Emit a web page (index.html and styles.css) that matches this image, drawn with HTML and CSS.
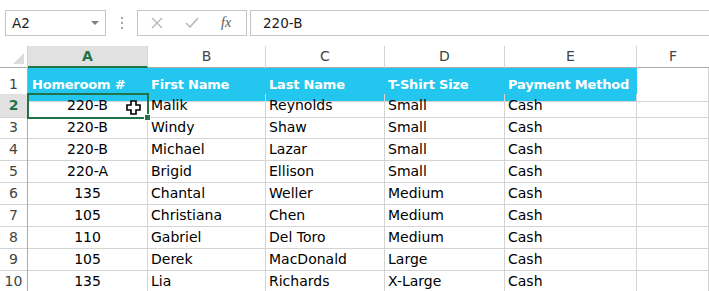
FILE: index.html
```html
<!DOCTYPE html>
<html>
<head>
    <title>Homeroom Sheet</title>
    <!-- Styles for the sheet live in the stylesheet below -->
    <link rel="stylesheet" href="styles.css">
</head>

<body>
    <!-- Name box and formula bar -->
    <div class="toolbar">
        <div class="name-box">
            <span>A2</span>
            <span class="drop-arrow"></span>
        </div>
        <div class="grip">
            <span></span><span></span><span></span>
        </div>
        <div class="fx-buttons">
            <svg class="fx-icon" width="12" height="12" viewBox="0 0 12 12">
                <path d="M1 1 L11 11 M11 1 L1 11" stroke="#b9b9b9" stroke-width="1.4" fill="none"/>
            </svg>
            <svg class="fx-icon" width="14" height="12" viewBox="0 0 14 12">
                <path d="M1 6 L5 10 L13 1" stroke="#b9b9b9" stroke-width="1.6" fill="none"/>
            </svg>
            <span class="fx-label">fx</span>
        </div>
        <div class="formula-input">220-B</div>
    </div>

    <!-- The worksheet grid -->
    <div class="sheet">
        <div class="row col-heads">
            <div class="corner"><span class="corner-mark"></span></div>
            <div class="col-head active">A</div>
            <div class="col-head">B</div>
            <div class="col-head">C</div>
            <div class="col-head">D</div>
            <div class="col-head">E</div>
            <div class="col-head">F</div>
        </div>

        <div class="row title-row">
            <div class="row-head">1</div>
            <div class="cell head">Homeroom #</div>
            <div class="cell head">First Name</div>
            <div class="cell head">Last Name</div>
            <div class="cell head">T-Shirt Size</div>
            <div class="cell head">Payment Method</div>
            <div class="cell"></div>
        </div>

        <div class="row">
            <div class="row-head active">2</div>
            <div class="cell num selected">220-B
                <svg class="cursor" width="15" height="15" viewBox="0 0 15 15">
                    <polygon points="5,1 10,1 10,5 14,5 14,10 10,10 10,14 5,14 5,10 1,10 1,5 5,5" fill="#fff" stroke="#000" stroke-width="1.6"/>
                </svg>
                <span class="fill-handle"></span>
            </div>
            <div class="cell">Malik</div>
            <div class="cell">Reynolds</div>
            <div class="cell">Small</div>
            <div class="cell">Cash</div>
            <div class="cell"></div>
        </div>
        <div class="row">
            <div class="row-head">3</div>
            <div class="cell num">220-B</div>
            <div class="cell">Windy</div>
            <div class="cell">Shaw</div>
            <div class="cell">Small</div>
            <div class="cell">Cash</div>
            <div class="cell"></div>
        </div>
        <div class="row">
            <div class="row-head">4</div>
            <div class="cell num">220-B</div>
            <div class="cell">Michael</div>
            <div class="cell">Lazar</div>
            <div class="cell">Small</div>
            <div class="cell">Cash</div>
            <div class="cell"></div>
        </div>
        <div class="row">
            <div class="row-head">5</div>
            <div class="cell num">220-A</div>
            <div class="cell">Brigid</div>
            <div class="cell">Ellison</div>
            <div class="cell">Small</div>
            <div class="cell">Cash</div>
            <div class="cell"></div>
        </div>
        <div class="row">
            <div class="row-head">6</div>
            <div class="cell num">135</div>
            <div class="cell">Chantal</div>
            <div class="cell">Weller</div>
            <div class="cell">Medium</div>
            <div class="cell">Cash</div>
            <div class="cell"></div>
        </div>
        <div class="row">
            <div class="row-head">7</div>
            <div class="cell num">105</div>
            <div class="cell">Christiana</div>
            <div class="cell">Chen</div>
            <div class="cell">Medium</div>
            <div class="cell">Cash</div>
            <div class="cell"></div>
        </div>
        <div class="row">
            <div class="row-head">8</div>
            <div class="cell num">110</div>
            <div class="cell">Gabriel</div>
            <div class="cell">Del Toro</div>
            <div class="cell">Medium</div>
            <div class="cell">Cash</div>
            <div class="cell"></div>
        </div>
        <div class="row">
            <div class="row-head">9</div>
            <div class="cell num">105</div>
            <div class="cell">Derek</div>
            <div class="cell">MacDonald</div>
            <div class="cell">Large</div>
            <div class="cell">Cash</div>
            <div class="cell"></div>
        </div>
        <div class="row">
            <div class="row-head">10</div>
            <div class="cell num">135</div>
            <div class="cell">Lia</div>
            <div class="cell">Richards</div>
            <div class="cell">X-Large</div>
            <div class="cell">Cash</div>
            <div class="cell"></div>
        </div>
    </div>
</body>
</html>
```

FILE: styles.css
```css
body {
    font-family: "DejaVu Sans", sans-serif;
    background-color: #fff;
    margin: 0;
    overflow: hidden;
    color: #000;
}

/* toolbar */
.toolbar {
    display: flex;
    align-items: center;
    margin-top: 10px;
    padding-left: 5px;
    height: 26px;
}

.name-box {
    box-sizing: border-box;
    width: 101px;
    height: 26px;
    border: 1px solid #c6c6c6;
    display: flex;
    align-items: center;
    justify-content: space-between;
    padding: 0 6px 0 6px;
    font-size: 13.5px;
    color: #222;
}

.drop-arrow {
    width: 0;
    height: 0;
    border-left: 4px solid transparent;
    border-right: 4px solid transparent;
    border-top: 4px solid #808080;
}

.grip {
    width: 31px;
    display: flex;
    flex-direction: column;
    align-items: center;
    gap: 3px;
}

.grip span {
    width: 2px;
    height: 2px;
    background-color: #a6a6a6;
}

.fx-buttons {
    box-sizing: border-box;
    width: 110px;
    height: 26px;
    border: 1px solid #c6c6c6;
    display: flex;
    align-items: center;
    padding-left: 13px;
}

.fx-icon {
    margin-right: 22px;
}

.fx-label {
    font-family: "Liberation Serif", serif;
    font-style: italic;
    font-size: 14px;
    color: #555;
}

.formula-input {
    box-sizing: border-box;
    flex: 1;
    height: 26px;
    margin-left: 3px;
    border: 1px solid #c6c6c6;
    border-right: none;
    display: flex;
    align-items: center;
    padding-left: 12px;
    font-size: 13.5px;
    color: #222;
}

/* sheet */
.sheet {
    margin-top: 10px;
}

.row {
    display: grid;
    grid-template-columns: 28px 120px 118px 119px 120px 132px 72px;
    height: 22px;
}

.col-heads {
    height: 21px;
    border-bottom: 1px solid #ababab;
}

.corner {
    position: relative;
    border-right: 1px solid #d4d4d4;
}

.corner-mark {
    position: absolute;
    right: 3px;
    bottom: 4px;
    width: 0;
    height: 0;
    border-left: 11px solid transparent;
    border-bottom: 11px solid #dcdcdc;
}

.col-head {
    box-sizing: border-box;
    border-right: 1px solid #d4d4d4;
    text-align: center;
    font-size: 14px;
    line-height: 21px;
    color: #444;
}

.col-head:last-child {
    border-right: none;
}

.col-head.active {
    background-color: #e1e1e1;
    color: #217346;
    font-weight: bold;
    border-bottom: 2px solid #217346;
    line-height: 20px;
}

.row-head {
    box-sizing: border-box;
    border-right: 1px solid #ababab;
    border-bottom: 1px solid #d4d4d4;
    text-align: center;
    font-size: 14px;
    line-height: 22px;
    color: #444;
}

.row-head.active {
    background-color: #e1e1e1;
    color: #217346;
    font-weight: bold;
}

.cell {
    box-sizing: border-box;
    border-right: 1px solid #d4d4d4;
    border-bottom: 1px solid #d4d4d4;
    padding-left: 3px;
    font-size: 14px;
    line-height: 23px;
    white-space: nowrap;
    overflow: hidden;
}

.cell.num {
    text-align: center;
    padding-left: 0;
}

.title-row {
    height: 26px;
}

.title-row .row-head {
    line-height: 33px;
}

.cell.head {
    background-color: #23c6ee;
    color: #fff;
    font-weight: bold;
    font-size: 13px;
    letter-spacing: -0.2px;
    line-height: 34px;
    border-right: none;
}

.cell.head:nth-child(2) {
    padding-left: 4px;
}

.cell.selected {
    position: relative;
    overflow: visible;
    outline: 2px solid #217346;
    outline-offset: -1px;
    z-index: 2;
}

.cursor {
    position: absolute;
    left: 98px;
    top: 6px;
}

.fill-handle {
    position: absolute;
    right: -4px;
    bottom: -4px;
    width: 5px;
    height: 5px;
    background-color: #217346;
    border: 1px solid #fff;
}
```
